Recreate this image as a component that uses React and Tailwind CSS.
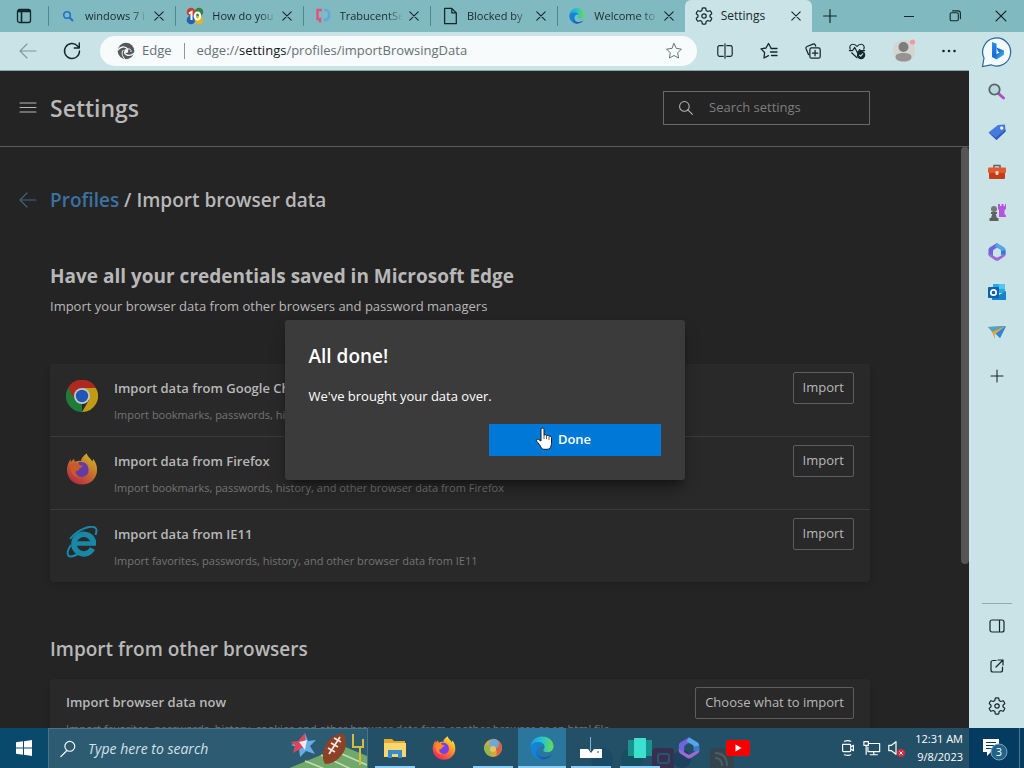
import clsx from "clsx";

const importSources = [
  {
    name: "Google Chrome",
    detail: "Import bookmarks, passwords, history, and other browser data from Google Chrome",
    Icon: ChromeIcon,
  },
  {
    name: "Firefox",
    detail: "Import bookmarks, passwords, history, and other browser data from Firefox",
    Icon: FirefoxIcon,
  },
  {
    name: "IE11",
    detail: "Import favorites, passwords, history, and other browser data from IE11",
    Icon: IeIcon,
  },
];

const tabs = [
  { title: "windows 7 i", Icon: BlueSearchIcon },
  { title: "How do you", Icon: TenForumsIcon },
  { title: "TrabucentSe", Icon: TrabucentIcon },
  { title: "Blocked by", Icon: FileIcon },
  { title: "Welcome to", Icon: EdgeIcon },
];

/* Thin outline icons share one 20px grid */
function Line({ children, className = "size-5", width = 1.1 }) {
  return (
    <svg
      viewBox="0 0 20 20"
      className={className}
      fill="none"
      stroke="currentColor"
      strokeWidth={width}
      strokeLinecap="round"
      strokeLinejoin="round"
      aria-hidden="true"
    >
      {children}
    </svg>
  );
}

function CloseIcon({ className = "size-3" }) {
  return (
    <Line className={className} width={1.8}>
      <path d="M3 3l14 14M17 3L3 17" />
    </Line>
  );
}

function PlusIcon() {
  return (
    <Line className="size-4" width={1.5}>
      <path d="M10 2v16M2 10h16" />
    </Line>
  );
}

function BackIcon() {
  return (
    <Line>
      <path d="M18 10H2.500M9 3L2 10l7 7" />
    </Line>
  );
}

function SearchIcon({ className, flip }) {
  return (
    <Line className={className} width={1.3}>
      {flip ? (
        <path d="M8 12.500L2 18.500M17.500 7a5.500 5.500 0 1 1-11 0 5.500 5.500 0 0 1 11 0Z" />
      ) : (
        <path d="M12 12l6 6M14 8A6 6 0 1 1 2 8a6 6 0 0 1 12 0Z" />
      )}
    </Line>
  );
}

function GearIcon() {
  return (
    <Line width={1.2}>
      <path d="M8.300 2.200Q10 1.700 11.700 2.200L12.200 4.600 13.700 5.500 16.100 4.700Q17.300 5.900 17.800 7.600L16 9.200V10.800L17.800 12.400Q17.300 14.100 16.100 15.300L13.700 14.500 12.200 15.400 11.700 17.800Q10 18.300 8.300 17.800L7.800 15.400 6.300 14.500 3.900 15.300Q2.700 14.100 2.200 12.400L4 10.800V9.200L2.200 7.600Q2.700 5.900 3.900 4.700L6.300 5.500 7.800 4.600Z" />
      <circle cx="10" cy="10" r="2.200" />
    </Line>
  );
}

function BlueSearchIcon() {
  return (
    <svg viewBox="0 0 16 16" className="size-4" fill="none" stroke="#1d74cf" aria-hidden="true">
      <circle cx="7" cy="7" r="3.300" strokeWidth="1.600" />
      <path d="M9.500 9.500L13 13" strokeWidth="2" />
    </svg>
  );
}

function TenForumsIcon() {
  return (
    <svg viewBox="0 0 18 18" className="size-[18px]" aria-hidden="true">
      <circle cx="5" cy="5" r="4.300" fill="#c5402c" />
      <circle cx="13" cy="5" r="4.300" fill="#3f7f3d" />
      <circle cx="5" cy="13" r="4.300" fill="#2462b4" />
      <circle cx="13" cy="13" r="4.300" fill="#e0b422" />
      <path d="M3 6.500L5.500 5v8" fill="none" stroke="#fff" strokeWidth="2" />
      <ellipse cx="11.500" cy="9" rx="2.600" ry="3.500" fill="none" stroke="#fff" strokeWidth="2" />
    </svg>
  );
}

function TrabucentIcon() {
  return (
    <svg viewBox="0 0 16 16" className="size-4" fill="none" strokeWidth="2.400" aria-hidden="true">
      <path d="M7 2H2.500v9H5v3.500" stroke="#e4517b" />
      <path d="M9 2h2.500l2.500 2.500v5L11.500 12H9" stroke="#62a8dc" />
    </svg>
  );
}

function FileIcon() {
  return (
    <Line className="size-[18px]" width={1.4}>
      <path d="M4 1.500h8l5 5v12H4ZM12 1.500v5h5" />
    </Line>
  );
}

function EdgeIcon({ className = "size-4" }) {
  return (
    <svg viewBox="0 0 24 24" className={className} aria-hidden="true">
      <defs>
        <linearGradient id="edgeTop" x1="0" x2="1" y1="0.300" y2="0.300">
          <stop offset="0" stopColor="#1b9de2" />
          <stop offset="0.500" stopColor="#26c3d0" />
          <stop offset="1" stopColor="#6bdc4c" />
        </linearGradient>
        <linearGradient id="edgeLow" x1="0" x2="1" y1="0" y2="1">
          <stop offset="0" stopColor="#1686d9" />
          <stop offset="1" stopColor="#124f9c" />
        </linearGradient>
      </defs>
      <path d="M0.500 11C1 4.500 6 .5 12 .5c7 0 11.500 4.600 11.500 9.800 0 3.700-2.700 6-6 6-2.500 0-4.200-.8-4.200-2 0-.9 1.300-1.300 1.300-3.300 0-2.700-2.700-4.700-6-4.700C4.500 6.300 1.500 8.300.5 11Z" fill="url(#edgeTop)" />
      <path d="M.5 11C1.500 8 4.700 6.300 8.300 6.300c3.200 0 5.700 1.700 6.200 4-2.300-1.500-6.500.4-6.500 4.700 0 4.500 4.500 7.500 9 6.400-1.500 1.300-3.500 2.100-5.500 2.100C5 23.500 0 17.500.5 11Z" fill="#1583d4" />
      <path d="M9.600 10.800C7 12.500 7 17.500 10 19.700c3.500 2.500 8.500 1.300 11.700-1.200-2 3.300-5.700 5-9.700 5-4.500-1.200-7.300-4.500-6.500-8.500.4-2 2-3.700 4.100-4.200Z" fill="url(#edgeLow)" />
    </svg>
  );
}

function EdgeGlyph() {
  return (
    <svg viewBox="0 0 18 18" className="size-[18px]" aria-hidden="true">
      <circle cx="9" cy="9" r="8.300" fill="#55595b" />
      <g fill="none" stroke="#f7fbfc">
        <circle cx="9.300" cy="9" r="2" fill="#f7fbfc" stroke="none" />
        <path d="M.5 8.500C3 4.500 8 3.500 11 7.500" strokeWidth="1.300" />
        <path d="M7.500 9.500c0 4 5 5.500 10 1.500" strokeWidth="1.300" />
        <path d="M6.500 8C4 10 5 14.500 8.500 17.500M11 7c2-.5 3.500 1 3 3" strokeWidth="1" />
      </g>
    </svg>
  );
}

function BingIcon() {
  return (
    <svg viewBox="0 0 32 32" className="size-8" aria-hidden="true">
      <defs>
        <linearGradient id="bing" x1="0" x2="1" y1="0" y2="1">
          <stop offset="0" stopColor="#2796ec" />
          <stop offset="0.500" stopColor="#1a6ad4" />
          <stop offset="1" stopColor="#45c9e8" />
        </linearGradient>
      </defs>
      <path d="M1.500 30.500L3 22A14 14 0 1 1 10 28.800Z" fill="#f3fafd" stroke="#2b659b" strokeWidth="1.200" />
      <path d="M11 6l4.500 1.700v10.500l3-1.700-1.500-1-1.500-4 7.500 3v4.200L15.500 23.500 11 21Z" fill="url(#bing)" />
    </svg>
  );
}

function LensIcon() {
  return (
    <svg viewBox="0 0 20 20" className="size-5" fill="none" aria-hidden="true">
      <path d="M12 12l4.500 4" stroke="#b64bc7" strokeWidth="3" strokeLinecap="round" />
      <circle cx="7.500" cy="7.500" r="5.200" fill="#b9d7dc" stroke="#55656b" strokeWidth="1.800" />
    </svg>
  );
}

function TagIcon() {
  return (
    <svg viewBox="0 0 20 20" className="size-5" aria-hidden="true">
      <path d="M1.500 10.500L11 3l7-.5.5 7L9.500 18Z" fill="#467bdd" />
      <path d="M1.500 10.500L9.500 18l9-8.500v-2L9 15.500Z" fill="#3158c2" />
      <circle cx="14.700" cy="6" r="1.700" fill="#e9f4fa" />
    </svg>
  );
}

function ToolboxIcon() {
  return (
    <svg viewBox="0 0 20 20" className="size-5" aria-hidden="true">
      <path d="M7 6V3.500h6V6" fill="none" stroke="#5d6367" strokeWidth="1.500" />
      <rect x="1" y="5.500" width="18" height="5.500" rx="1" fill="#e4592b" />
      <path d="M2 11h16v5a1 1 0 0 1-1 1H3a1 1 0 0 1-1-1Z" fill="#c33c1c" />
      <rect x="8.500" y="9" width="3" height="4" rx="1" fill="#f4d9c7" />
    </svg>
  );
}

function GamesIcon() {
  return (
    <svg viewBox="0 0 20 20" className="size-5" aria-hidden="true">
      <path d="M11 2h2v2h1.500V2h2v2H18V2h1v5l-1.500 1v4l1.500 1.500V15h-7V8l-1-1Z" fill="#b653e0" />
      <path d="M4 10h6v2H8.700l1.300 4h1.500v3h-9v-3H4l1.300-4H4Z" fill="#5c6261" />
      <circle cx="7" cy="7" r="3" fill="#727978" />
    </svg>
  );
}

function M365Icon({ className = "size-5" }) {
  return (
    <svg viewBox="0 0 20 20" className={className} aria-hidden="true">
      <path d="M10 1L3 5.200A3 3 0 0 0 1.500 8v5l4.500 1.500V9.200A2 2 0 0 1 7 7.500L12.500 4.200Z" fill="#6d65dc" />
      <path d="M10 1l7 4.200A3 3 0 0 1 18.500 8v5L14 12V9.200a2 2 0 0 0-1-1.700L8 4.500Z" fill="#55a5e8" />
      <path d="M1.500 11v1a3 3 0 0 0 1.500 2.700l5.500 3.700a3 3 0 0 0 3 0l5.500-3.700a3 3 0 0 0 1.500-2.700v-1L11 15.300a2 2 0 0 1-2 0Z" fill="#9e68d6" />
      <path d="M14 9v4l4.500-1V8Z" fill="#397bd2" />
    </svg>
  );
}

function OutlookIcon() {
  return (
    <svg viewBox="0 0 20 20" className="size-5" aria-hidden="true">
      <path d="M6 2h12v9H6Z" fill="#2ba7e3" />
      <path d="M12 2h6v5h-6Z" fill="#55c4f0" />
      <path d="M5 9l7 4 7-4v9H5Z" fill="#1681cc" />
      <rect x="1" y="5" width="11" height="11" rx="1" fill="#0b62af" />
      <circle cx="6.500" cy="10.500" r="2.700" fill="none" stroke="#fff" strokeWidth="1.700" />
    </svg>
  );
}

function PlaneIcon() {
  return (
    <svg viewBox="0 0 20 20" className="size-5" aria-hidden="true">
      <path d="M1 5l18-1-6 12-4-4Z" fill="#3b97de" />
      <path d="M1 5l18-1L6 11Z" fill="#5d9fbd" />
      <path d="M5 10L19 4 8 12v5Z" fill="#e0a93d" />
      <path d="M19 4l-6 12-4-4Z" fill="#2f86d6" />
    </svg>
  );
}

function ChromeIcon() {
  return (
    <svg viewBox="0 0 32 32" className="size-8 shrink-0" aria-hidden="true">
      <path d="M16 16L2.100 8A16 16 0 0 1 29.900 8Z" fill="#ae2a20" />
      <path d="M16 16v16A16 16 0 0 1 2.100 8Z" fill="#1f7c37" />
      <path d="M16 8h13.900A16 16 0 0 1 16 32l7-12Z" fill="#c29b15" />
      <path d="M2.100 8L9.200 20A8 8 0 0 1 16 8h13.900A16 16 0 0 0 2.100 8Z" fill="#ae2a20" />
      <circle cx="16" cy="16" r="8" fill="#c4c6c7" />
      <circle cx="16" cy="16" r="6.200" fill="#2057b5" />
    </svg>
  );
}

function FirefoxIcon({ className = "size-8 shrink-0", id = "fx", bright = false }) {
  return (
    <svg viewBox="0 0 32 34" className={className} aria-hidden="true">
      <defs>
        <linearGradient id={id} x1="0.850" x2="0.250" y1="0.100" y2="0.950">
          <stop offset="0" stopColor={bright ? "#ffe53b" : "#c9b02c"} />
          <stop offset="0.450" stopColor={bright ? "#ff8b27" : "#c9702a"} />
          <stop offset="1" stopColor={bright ? "#f32664" : "#b82c44"} />
        </linearGradient>
      </defs>
      <path d="M21 .5c1 3.500 4 5 6 8.500l1-2.500c3 4 4 7.500 4 11.500 0 9-7 15.500-16 15.500S0 27 0 18C0 13 2 9.500 4 6v3.500L7.500 6l1 3.500c2-1 4-1.500 6.500-1 0-3 3-6 6-8Z" fill={`url(#${id})`} />
      <path d="M12 10c6-2 11 2 11 8a7 7 0 0 1-14 1c0-1 .5-2 1-3 3 0 4.500-1.500 5-3-2 0-3-1-3-3Z" fill={bright ? "#7542e5" : "#643aa5"} />
      <path d="M4 13c3-3 6-3 9-.5 1 1 2.500.5 4 1-.5 2-3.500 2-4 3.500 0 2-2.500 2-4 2.500-.5 3 2 5.500 5 6-6 1.500-11-4.500-10-12.500Z" fill={bright ? "#ff8a2e" : "#c45c2d"} />
    </svg>
  );
}

function IeIcon() {
  return (
    <svg viewBox="0 0 32 32" className="size-8 shrink-0" fill="none" aria-hidden="true">
      <path d="M26.500 22.500A9.800 9.800 0 1 1 27.500 17" stroke="#1988a8" strokeWidth="5.500" />
      <path d="M8 17.500h22" stroke="#1988a8" strokeWidth="4.500" />
      <path d="M5 19C-1 28 1 34 12 28M4 13C11 4 25-2 29.500 2c2 1.500 1 4 0 7" stroke="#1988a8" strokeWidth="2" />
    </svg>
  );
}

function HandCursor() {
  return (
    <svg viewBox="0 0 18 24" className="h-6 w-[18px]" aria-hidden="true">
      <path d="M6 2.500a1.500 1.500 0 0 1 3 0V8l1.500-.3 1 .8 1.500-.2 1 .9 1.500 0 1 1.300v6c0 2-1 3.300-1.500 5-1 1-7 1.300-8.500 0C6 19 3 16 1.500 14c-.7-1 .5-2.300 2-1.500L6 14Z" fill="#fff" stroke="#1b1b1b" />
      <path d="M9 8v4M11.500 9v3M14 10v3" stroke="#333" strokeWidth="0.800" />
    </svg>
  );
}

function Tab({ title, Icon, active }) {
  return (
    <div
      className={clsx(
        "flex h-8 min-w-0 flex-1 items-center px-[9px]",
        active && "rounded-t-md bg-[#c9e3e6]"
      )}
    >
      <span className="flex w-5 shrink-0 justify-center">
        <Icon />
      </span>
      <span
        className={clsx(
          "ml-[7px] min-w-0 flex-1 overflow-hidden whitespace-nowrap text-[#17292d]",
          active && "text-xs",
          !active && "text-[11px] [mask-image:linear-gradient(to_right,black_75%,transparent)]"
        )}
      >
        {title}
      </span>
      <button aria-label={`Close ${title}`} className="ml-1 p-px">
        <CloseIcon />
      </button>
    </div>
  );
}

function TabStrip() {
  return (
    <header className="flex h-8 shrink-0 bg-[#80b9c0] text-[#14272b]">
      <button aria-label="Tab actions" className="flex w-12 shrink-0 items-center justify-center">
        <svg viewBox="0 0 16 16" className="size-4" fill="none" stroke="currentColor" strokeWidth="1.300" aria-hidden="true">
          <rect x="1.500" y="1.500" width="13" height="13" rx="2" />
          <path d="M2 3.500h12M5.500 4v10" strokeWidth="1.600" />
          <path d="M2 2.500h12" strokeWidth="2" />
        </svg>
      </button>
      <nav className="flex min-w-0 max-w-[764px] flex-1" aria-label="Tabs">
        {tabs.map((tab) => (
          <div key={tab.title} className="flex min-w-0 flex-1 items-center">
            <div className="h-5 w-px shrink-0 bg-[#4f878f]" />
            <Tab {...tab} />
          </div>
        ))}
        <div className="flex min-w-0 flex-1">
          <Tab title="Settings" Icon={GearIcon} active />
        </div>
      </nav>
      <button aria-label="New tab" className="flex w-9 items-center justify-center">
        <PlusIcon />
      </button>
      <div className="ml-auto flex">
        <button aria-label="Minimize" className="flex w-[46px] items-center justify-center">
          <span className="h-px w-[10px] bg-current" />
        </button>
        <button aria-label="Restore" className="flex w-[46px] items-center justify-center">
          <Line className="size-3" width={1.8}>
            <path d="M2 6.500a2 2 0 0 1 2-2h9.500a2 2 0 0 1 2 2V16a2 2 0 0 1-2 2H4a2 2 0 0 1-2-2ZM6 1.500h9a4 4 0 0 1 4 4v9" />
          </Line>
        </button>
        <button aria-label="Close window" className="flex w-[46px] items-center justify-center">
          <CloseIcon className="size-[14px]" />
        </button>
      </div>
    </header>
  );
}

function Toolbar() {
  return (
    <div className="flex h-[39px] shrink-0 items-center border-b border-[#8fa6a9] pl-[6px] text-[#14272b]">
      <button aria-label="Back" className="flex w-11 justify-center text-[#7d989c]">
        <BackIcon />
      </button>
      <button aria-label="Reload" className="flex w-11 justify-center">
        <Line width={1.400}>
          <path d="M17.500 10A7.500 7.500 0 1 1 15.500 4.900L17 6.500M17.300 2v5h-5" />
        </Line>
      </button>
      <div className="ml-[6px] mr-[6px] flex h-[30px] min-w-0 flex-1 items-center rounded-full bg-[#f7fbfc] pl-[17px] pr-[14px] text-[13px] text-[#667073]">
        <EdgeGlyph />
        <span className="ml-[7px]">Edge</span>
        <span className="mx-3 h-4 w-px bg-[#8d9799]" />
        <span className="min-w-0 flex-1 truncate">
          edge://<span className="text-[#15191a]">settings</span>/profiles/importBrowsingData
        </span>
        <button aria-label="Add to favorites">
          <Line className="size-[18px]">
            <path d="M10 1.800l2.500 5.300 5.700.8-4.100 4.100 1 5.800L10 15l-5.100 2.800 1-5.800L1.800 7.900l5.700-.8Z" />
          </Line>
        </button>
      </div>
      <button aria-label="Split screen" className="flex w-11 justify-center">
        <Line className="size-[18px]" width={1.3}>
          <path d="M8 4H4a2 2 0 0 0-2 2v8a2 2 0 0 0 2 2h4M12 4h4a2 2 0 0 1 2 2v8a2 2 0 0 1-2 2h-4M10 2v16" />
        </Line>
      </button>
      <button aria-label="Favorites" className="flex w-11 justify-center">
        <Line width={1.3}>
          <path d="M12 7L9.500 2.500 7 7l-5 .8 3.600 3.700L5 17l4.500-2.300M12 7.500h6M11.500 11H18M12.500 14.500H18" />
        </Line>
      </button>
      <button aria-label="Collections" className="flex w-11 justify-center">
        <Line className="size-[18px]" width={1.4}>
          <path d="M5 14L2.300 7.500a2 2 0 0 1 1-2.500L10 2.300a2 2 0 0 1 2.500 1L13 4.500M8.500 6.500H16a2 2 0 0 1 2 2V16a2 2 0 0 1-2 2H8.500a2 2 0 0 1-2-2V8.500a2 2 0 0 1 2-2ZM12.300 9.300v6M9.300 12.300h6" />
        </Line>
      </button>
      <button aria-label="Browser essentials" className="flex w-11 justify-center">
        <Line className="size-[18px]" width={1.3}>
          <path d="M2.500 8C1 5 3 2.500 5.500 2.500c2 0 3.500 1 4.500 2.500 1-1.500 2.500-2.500 4.500-2.500C17 2.500 19 5 17.500 8M1.500 9.500H5L7.500 6l3 6L13 8.500l1 1h4.500M4 12l6 5.500" />
          <circle cx="14.500" cy="14.500" r="4" fill="currentColor" />
          <path d="M12.800 14.500l1.300 1.300 2.200-2.600" stroke="#c9e3e6" />
        </Line>
      </button>
      <button aria-label="Profile" className="flex w-[50px] justify-center">
        <svg viewBox="0 0 24 24" className="size-6" aria-hidden="true">
          <circle cx="12" cy="12" r="11" fill="#d4d5d3" />
          <circle cx="11.500" cy="8" r="5" fill="#7d7d7d" />
          <path d="M3.500 18c0-3 3.500-4 8-4s8 1 8 4-3.500 4.500-8 4.500-8-1.500-8-4.500Z" fill="#969393" />
          <circle cx="20.500" cy="3" r="2.600" fill="#f09a9c" />
        </svg>
      </button>
      <button aria-label="Settings and more" className="flex w-10 justify-center">
        <svg viewBox="0 0 16 16" className="size-4" fill="currentColor" aria-hidden="true">
          <circle cx="2.500" cy="8" r="1.300" />
          <circle cx="8" cy="8" r="1.300" />
          <circle cx="13.500" cy="8" r="1.300" />
        </svg>
      </button>
    </div>
  );
}

function OutlineButton({ children }) {
  return (
    <button className="absolute right-4 top-2 h-8 rounded-[2px] border border-[#5e5e5e] bg-[#292929] px-[9px] text-[13px] text-[#b8b8b8]">
      {children}
    </button>
  );
}

function SettingsPage() {
  return (
    <main className="relative min-h-0 flex-1 overflow-hidden bg-[#242424] text-[#b8b8b8]">
      <div className="flex h-[76px] items-center border-b border-[#5b5b5b] pb-[2px] pl-[18px]">
        <button aria-label="Menu">
          <Line>
            <path d="M2 5h16M2 9.500h16M2 14h16" />
          </Line>
        </button>
        <div className="ml-3 flex max-w-[820px] flex-1 items-center justify-between">
          <h1 className="text-[23px] font-semibold leading-8">Settings</h1>
          <form className="flex h-[34px] w-[207px] items-center gap-[15px] border border-[#686868] px-[14px]">
            <SearchIcon className="size-4 shrink-0" />
            <input
              type="search"
              aria-label="Search settings"
              placeholder="Search settings"
              className="w-full min-w-0 bg-transparent text-[13px] outline-none placeholder:text-[#7e7e7e]"
            />
          </form>
        </div>
        <div className="w-[99px] shrink-0" />
      </div>

      <div className="pl-[18px] pt-[39px]">
        <div className="flex h-7 items-center gap-3">
          <button aria-label="Back to profiles" className="text-[#466579]">
            <BackIcon />
          </button>
          <h2 className="text-[19px] font-semibold">
            <a href="#profiles" className="text-[#3c72a1]">Profiles</a> / Import browser data
          </h2>
        </div>

        <div className="ml-8 mr-[99px] max-w-[820px]">
          <section>
            <h2 className="mt-12 text-[19px] font-bold leading-7">
              Have all your credentials saved in Microsoft Edge
            </h2>
            <p className="mt-[6px] text-[13px] leading-5">
              Import your browser data from other browsers and password managers
            </p>
            <ul className="mt-12 divide-y divide-[#3b3b3b] rounded bg-[#292929] shadow-md">
              {importSources.map(({ name, detail, Icon }) => (
                <li key={name} className="relative flex gap-4 px-4 pb-[11px]">
                  <div className="pt-4">
                    <Icon />
                  </div>
                  <div className="pt-[14px]">
                    <h3 className="text-[13px] font-semibold leading-5">Import data from {name}</h3>
                    <p className="mt-[7px] text-[11px] leading-5 text-[#747474]">{detail}</p>
                  </div>
                  <OutlineButton>Import</OutlineButton>
                </li>
              ))}
            </ul>
          </section>

          <section>
            <h2 className="mt-[53px] text-[19px] font-semibold leading-7">Import from other browsers</h2>
            <div className="relative mt-4 rounded bg-[#292929] px-4 pb-[11px] pt-[13px] shadow-md">
              <h3 className="text-[13px] font-semibold leading-5">Import browser data now</h3>
              <p className="mt-[7px] text-[11px] leading-5 text-[#747474]">
                Import favorites, passwords, history, cookies and other browser data from another browser or an html file
              </p>
              <OutlineButton>Choose what to import</OutlineButton>
            </div>
          </section>
        </div>
      </div>

      {/* Scroll thumb */}
      <div className="absolute right-0 top-[76px] h-[417px] w-2 rounded-sm bg-[#555555]" />

      <div className="absolute inset-0 flex items-center justify-center">
        <div role="dialog" aria-labelledby="done-title" className="w-[400px] rounded-[3px] bg-[#3b3b3b] p-6 text-white shadow-lg shadow-black/40">
          <h2 id="done-title" className="text-[19px] font-semibold leading-6">All done!</h2>
          <p className="mt-[18px] text-[13px] leading-5">We've brought your data over.</p>
          <div className="mt-[18px] flex justify-end">
            <button className="relative h-8 w-[172px] bg-[#0078d7] text-[13px] font-semibold">
              Done
              <span className="absolute left-[46px] top-[3px]">
                <HandCursor />
              </span>
            </button>
          </div>
        </div>
      </div>
    </main>
  );
}

const sidebarApps = [
  ["Search", LensIcon],
  ["Shopping", TagIcon],
  ["Tools", ToolboxIcon],
  ["Games", GamesIcon],
  ["Microsoft 365", M365Icon],
  ["Outlook", OutlookIcon],
  ["Drop", PlaneIcon],
];

function Sidebar() {
  return (
    <aside className="flex w-[55px] shrink-0 flex-col items-center text-[#14272b]">
      <button aria-label="Bing chat" className="flex h-10 items-center">
        <BingIcon />
      </button>
      {sidebarApps.map(([label, Icon]) => (
        <button key={label} aria-label={label} className="flex h-10 items-center">
          <Icon />
        </button>
      ))}
      <button aria-label="Customize" className="mt-1 flex h-10 items-center">
        <Line className="size-4" width={1.3}>
          <path d="M10 2.500v15M2.500 10h15" />
        </Line>
      </button>
      <div className="mt-auto w-[30px] border-t border-[#93a9ac]" />
      <div className="flex flex-col pb-[2px] pt-[2px]">
        <button aria-label="Hide sidebar" className="flex h-10 items-center">
          <Line width={1.200}>
            <path d="M5 4h10a2 2 0 0 1 2 2v8a2 2 0 0 1-2 2H5a2 2 0 0 1-2-2V6a2 2 0 0 1 2-2ZM12.500 4v12" />
          </Line>
        </button>
        <button aria-label="Open in new window" className="flex h-10 items-center">
          <Line width={1.200}>
            <path d="M9 4.500H6a2 2 0 0 0-2 2V14a2 2 0 0 0 2 2h7.500a2 2 0 0 0 2-2v-3M11 4h5v5M16 4l-7 7" />
          </Line>
        </button>
        <button aria-label="Sidebar settings" className="flex h-10 items-center">
          <GearIcon />
        </button>
      </div>
    </aside>
  );
}

function FootballArt() {
  return (
    <svg viewBox="0 0 80 40" className="h-10 w-20 shrink-0" aria-hidden="true">
      <path d="M0 40L56 17l24 10v13Z" fill="#72a96b" />
      <path d="M18 32l20 8M34 26l30 14M46 21l34 15" stroke="#c6dfb9" strokeWidth="1.500" />
      <path d="M18 4l3 8 8-1-6 6 5 8-9-3-6 6-1-9-8-3 8-3Z" fill="#67aee8" />
      <path d="M18 4l1 13-13 7 2-8-5-3 8-1Z" fill="#d9455c" />
      <path d="M12 13l8-2-2 10Z" fill="#f0e9ee" />
      <path d="M66 5v13h10V10M73 18v18" fill="none" stroke="#d5bd39" strokeWidth="2" />
      <path d="M57 5c4 8 2 18-5 24-4 4-9 6-14 6-4-7-2-17 3-23C45 7 51 4 57 5Z" fill="#8b4229" />
      <path d="M53 8L42 25M47 9l7 4M44 14l7 4M41 19l7 4" stroke="#f4e7dc" strokeWidth="1.800" />
    </svg>
  );
}

function ExplorerIcon() {
  return (
    <svg viewBox="0 0 24 24" className="size-6" aria-hidden="true">
      <path d="M1 3h8l2 2h11v16H1Z" fill="#e4a92e" />
      <path d="M1 7h22v14H1Z" fill="#fbd66e" />
      <path d="M5 14h14v8h-4v-4H9v4H5Z" fill="#368ccb" />
    </svg>
  );
}

function GlobeFoxIcon() {
  return (
    <svg viewBox="0 0 24 24" className="size-6" aria-hidden="true">
      <circle cx="12" cy="12" r="9" fill="#d8a83d" />
      <path d="M10 3a9 9 0 0 1 11 8c0 5-3 8-6 9 2-5 0-7-3-8Z" fill="#dc6243" />
      <circle cx="13" cy="8" r="5" fill="#6ca9d7" />
      <path d="M4 9c4 0 7 3 6 11-5-1-8-6-6-11Z" fill="#91b94d" />
      <circle cx="12" cy="13" r="3" fill="#eac55d" />
    </svg>
  );
}

function DriveIcon() {
  return (
    <svg viewBox="0 0 24 24" className="size-6" aria-hidden="true">
      <path d="M1 13h8l3 4 3-4h8v9H1Z" fill="#fff" />
      <path d="M11.500 1v14" stroke="#82b3d0" />
      <path d="M18 16h2" stroke="#275166" />
    </svg>
  );
}

function PhoneIcon() {
  return (
    <svg viewBox="0 0 24 24" className="size-6" aria-hidden="true">
      <path d="M0 4h6v16H0ZM18 4h6v16h-6Z" fill="#18928f" />
      <path d="M6 2h12v20H6Z" fill="#3ce0d0" />
    </svg>
  );
}

function YoutubeIcon() {
  return (
    <svg viewBox="0 0 24 24" className="size-6" aria-hidden="true">
      <rect y="4" width="24" height="16" rx="3" fill="#f80000" />
      <path d="M9.500 8.500l6 3.500-6 3.500Z" fill="#fff" />
    </svg>
  );
}

/* Dark icons of the window behind, seen through the taskbar */
function SeeThroughIcons() {
  return (
    <svg viewBox="0 0 160 20" className="absolute bottom-0 left-[590px] h-5 w-40" aria-hidden="true">
      <g fill="#193b52">
        <circle cx="12" cy="11" r="11" fill="#1b4a66" />
        <circle cx="42" cy="11" r="11" fill="#174f62" />
        <rect x="62" width="22" height="24" rx="4" fill="#382f4e" />
        <circle cx="92" cy="11" r="9" fill="#1d405c" />
        <rect x="120" width="24" height="24" rx="4" fill="#33444c" />
      </g>
      <rect x="68" y="6" width="11" height="9" rx="2" fill="none" stroke="#24566d" strokeWidth="2" />
      <path d="M125 5q12 0 12 13M125 10q7 0 7 8" fill="none" stroke="#4c5d63" strokeWidth="2" />
    </svg>
  );
}

const taskbarApps = [
  { label: "File Explorer", icon: <ExplorerIcon />, open: true },
  { label: "Firefox", icon: <FirefoxIcon className="size-6" id="fxTask" bright /> },
  { label: "Browser", icon: <GlobeFoxIcon />, open: true },
  { label: "Microsoft Edge", icon: <EdgeIcon className="size-6" />, open: true, active: true },
  { label: "Installer", icon: <DriveIcon />, open: true },
  { label: "Phone", icon: <PhoneIcon />, open: true },
  { label: "Microsoft 365", icon: <M365Icon className="size-6" /> },
  { label: "YouTube", icon: <YoutubeIcon /> },
];

function Taskbar() {
  return (
    <footer className="relative flex h-10 shrink-0 bg-[#245067] text-white">
      <SeeThroughIcons />
      <button aria-label="Start" className="flex w-12 shrink-0 items-center justify-center bg-[#094a6c]">
        <svg viewBox="0 0 16 16" className="size-4" fill="#fff" aria-hidden="true">
          <path d="M0 2.300L7 1.300v6.200H0ZM8 1.200L16 0v7.500H8ZM0 8.500h7v6.200l-7-1ZM8 8.500h8V16l-8-1.200Z" />
        </svg>
      </button>
      <form className="flex w-80 items-center border border-b-0 border-[#47758b] bg-[#2d5b71] pl-[10px]">
        <SearchIcon className="size-[18px] shrink-0" flip />
        <input
          aria-label="Type here to search"
          placeholder="Type here to search"
          className="ml-[11px] min-w-0 flex-1 bg-transparent text-[14px] italic outline-none placeholder:text-[#d3e2e8]"
        />
        <FootballArt />
      </form>
      <nav className="flex gap-px pl-[3px]" aria-label="Apps">
        {taskbarApps.map(({ label, icon, open, active }) => (
          <button
            key={label}
            aria-label={label}
            className={clsx("relative flex w-12 items-center justify-center", active && "bg-[#2a769c]")}
          >
            {icon}
            {open && (
              <span className={clsx("absolute bottom-0 h-[2px] bg-[#8bcdf3]", active ? "inset-x-0" : "inset-x-1")} />
            )}
          </button>
        ))}
      </nav>
      <div className="ml-auto flex items-center gap-[6px] pr-[6px]">
        <Line className="size-[18px]" width={1.300}>
          <path d="M4 6h8a1 1 0 0 1 1 1v6a1 1 0 0 1-1 1H5a1 1 0 0 1-1-1ZM13 9l3-2v6l-3-2M6 2.500q4-1.500 7 0M6 17.500q4 1.500 7 0" />
        </Line>
        <Line className="size-[18px]" width={1.300}>
          <path d="M7 5h11.500v9H5.500V9M12 14v3M8 17.500h8M1 3h5v4H1ZM3.500 7v10" />
        </Line>
        <span className="relative">
          <Line className="size-[18px]" width={1.300}>
            <path d="M2 7h3l5-4v14l-5-4H2Z" />
          </Line>
          <svg viewBox="0 0 8 8" className="absolute bottom-0 right-0 size-2" aria-hidden="true">
            <circle cx="4" cy="4" r="4" fill="#d32c3a" />
            <path d="M2.500 2.500l3 3M5.500 2.500l-3 3" stroke="#fff" />
          </svg>
        </span>
        <div className="ml-1 text-right text-[11px] leading-[18px]">
          <div>12:31 AM</div>
          <div>9/8/2023</div>
        </div>
      </div>
      <button aria-label="3 notifications" className="flex w-[55px] items-center bg-[#053b60] pl-[13px]">
        <svg viewBox="0 0 26 26" className="size-[26px]" aria-hidden="true">
          <path d="M1 4h16v13H9l-4 4v-4H1Z" fill="#fff" />
          <path d="M4 7.500h10M4 10.500h10M4 13.500h6" stroke="#053b60" />
          <circle cx="17" cy="17" r="8" fill="#216488" stroke="#72a5bf" />
          <text x="17" y="21" fontSize="11" textAnchor="middle" fill="#fff">3</text>
        </svg>
        <span className="ml-auto mr-1 h-full w-px bg-[#53778d]" />
      </button>
    </footer>
  );
}

export default function App() {
  return (
    <div className="flex h-screen flex-col overflow-hidden bg-[#c9e3e6] font-['Open_Sans','Noto_Sans',sans-serif]">
      <TabStrip />
      <div className="flex min-h-0 flex-1">
        <div className="flex min-w-0 flex-1 flex-col">
          <Toolbar />
          <SettingsPage />
        </div>
        <Sidebar />
      </div>
      <Taskbar />
    </div>
  );
}
